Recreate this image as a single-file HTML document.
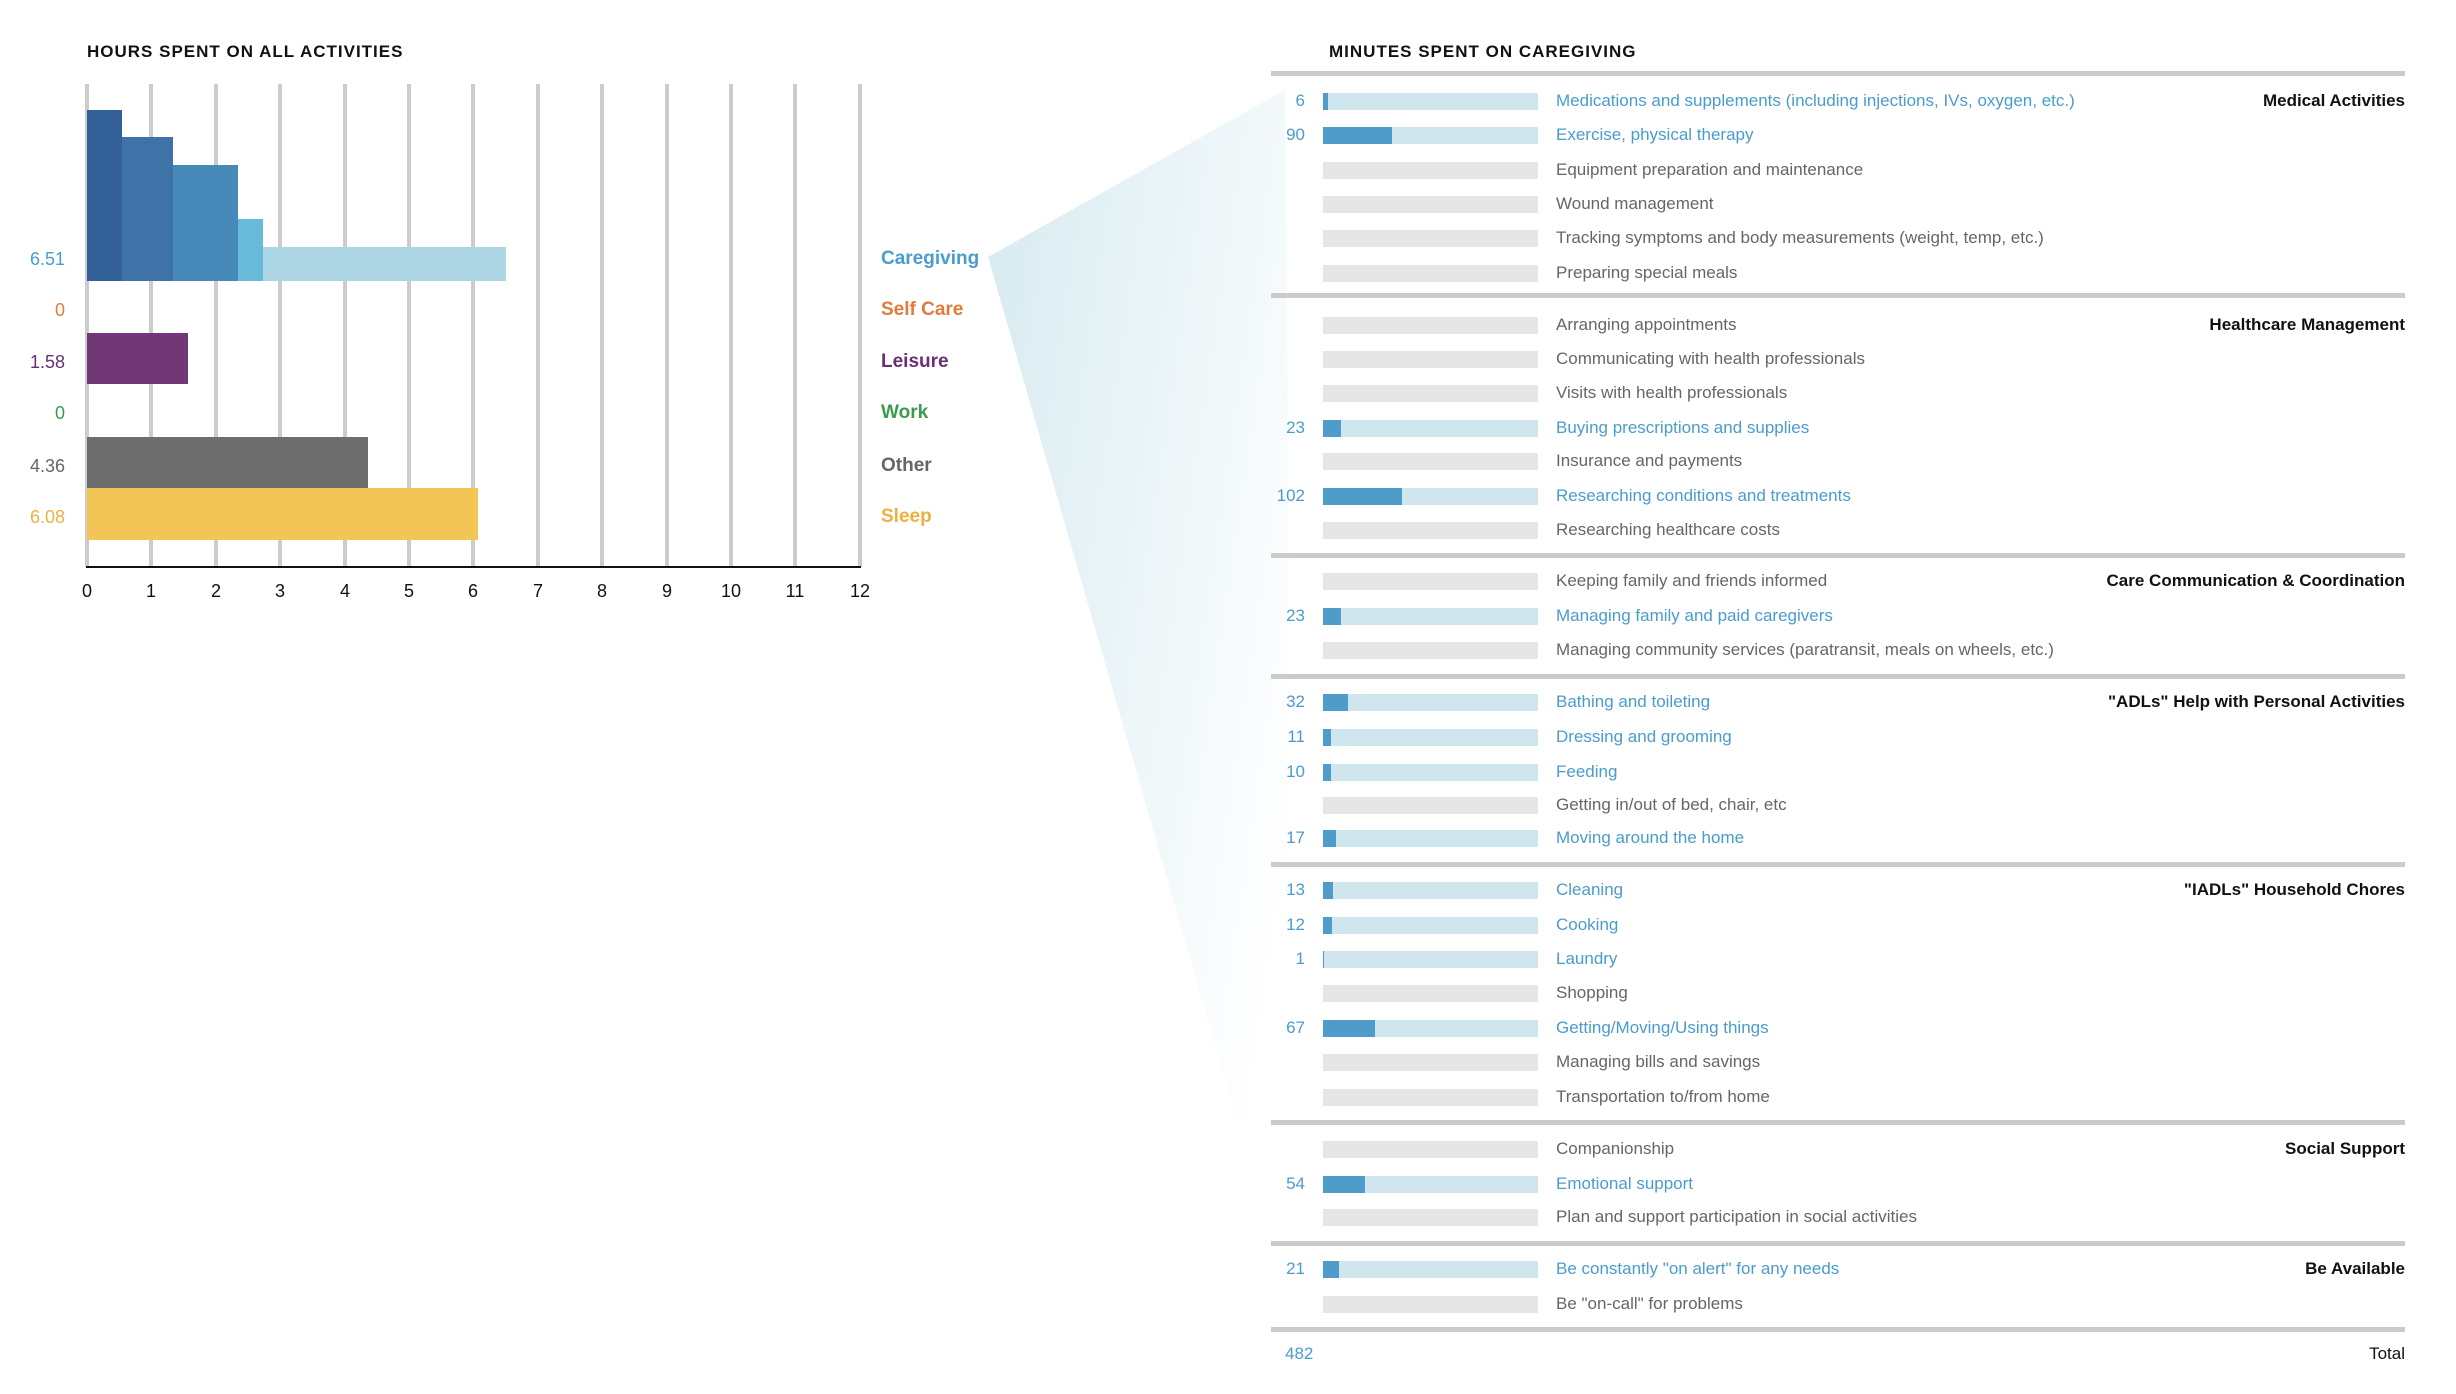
<!DOCTYPE html>
<html><head><meta charset="utf-8"><style>
html,body{margin:0;padding:0;background:#fff;width:2456px;height:1394px;overflow:hidden;position:relative;font-family:"Liberation Sans Narrow","Liberation Sans",sans-serif}
.a{position:absolute}
.title{font-family:"Liberation Sans",sans-serif;font-weight:bold;font-size:17px;letter-spacing:1px;color:#111}
.g{position:absolute;top:84px;height:483px;width:4px;background:#cccccc}
.tk{position:absolute;top:581px;font-size:18px;color:#111;width:40px;margin-left:-20px;text-align:center}
.v{position:absolute;left:0;width:65px;text-align:right;font-size:18px}
.cl{position:absolute;left:881px;font-size:19px;font-weight:bold}
.r{position:absolute;left:1270px;width:1135px;height:20px}
.r .n{position:absolute;left:0;width:35px;text-align:right;font-size:17px;color:#4a9ccc;line-height:20px}
.r .b{position:absolute;left:53px;top:2px;width:215px;height:17px;background:#e6e6e6}
.r .b.on{background:#cfe6ee}
.r .b i{position:absolute;left:0;top:0;height:17px;background:#4f9ccb}
.r .t{position:absolute;left:286px;font-size:17px;color:#666;line-height:20px;white-space:nowrap}
.r .t.on{color:#4a9ccc}
.r .c{position:absolute;right:0;font-size:17px;font-weight:bold;color:#111;line-height:20px;white-space:nowrap}
.rule{position:absolute;left:1271px;width:1134px;height:5px;background:#cbcbcb}
</style></head><body>
<svg class="a" style="left:0;top:0" width="2456" height="1394">
<defs><linearGradient id="fg" x1="0" y1="0" x2="1" y2="0.6"><stop offset="0" stop-color="#d6eaf0"/><stop offset="1" stop-color="#ffffff"/></linearGradient></defs>
<polygon points="988,257 1285,90 1295,1322" fill="url(#fg)"/>
</svg>
<div class="a title" style="left:87px;top:42px">HOURS SPENT ON ALL ACTIVITIES</div>
<div class="g" style="left:85px"></div><div class="g" style="left:149px"></div><div class="g" style="left:214px"></div><div class="g" style="left:278px"></div><div class="g" style="left:343px"></div><div class="g" style="left:407px"></div><div class="g" style="left:471px"></div><div class="g" style="left:536px"></div><div class="g" style="left:600px"></div><div class="g" style="left:665px"></div><div class="g" style="left:729px"></div><div class="g" style="left:793px"></div><div class="g" style="left:858px"></div>
<div class="a" style="left:87px;top:110px;width:35px;height:171px;background:#336098"></div>
<div class="a" style="left:122px;top:137px;width:51px;height:144px;background:#3f73a8"></div>
<div class="a" style="left:173px;top:165px;width:65px;height:116px;background:#4789b8"></div>
<div class="a" style="left:238px;top:219px;width:25px;height:62px;background:#68bada"></div>
<div class="a" style="left:263px;top:247px;width:243px;height:34px;background:#acd6e4"></div>
<div class="a" style="left:87px;top:333px;width:101px;height:51px;background:#713878"></div>
<div class="a" style="left:87px;top:437px;width:281px;height:51px;background:#6e6e6e"></div>
<div class="a" style="left:87px;top:488px;width:391px;height:52px;background:#f1c556"></div>
<div class="a" style="left:86px;top:566px;width:775px;height:2px;background:#111"></div>
<div class="tk" style="left:87px">0</div><div class="tk" style="left:151px">1</div><div class="tk" style="left:216px">2</div><div class="tk" style="left:280px">3</div><div class="tk" style="left:345px">4</div><div class="tk" style="left:409px">5</div><div class="tk" style="left:473px">6</div><div class="tk" style="left:538px">7</div><div class="tk" style="left:602px">8</div><div class="tk" style="left:667px">9</div><div class="tk" style="left:731px">10</div><div class="tk" style="left:795px">11</div><div class="tk" style="left:860px">12</div>
<div class="v" style="top:249px;color:#4a9ccc">6.51</div>
<div class="v" style="top:300px;color:#e07b39">0</div>
<div class="v" style="top:352px;color:#6a2f78">1.58</div>
<div class="v" style="top:403px;color:#3a9b4f">0</div>
<div class="v" style="top:456px;color:#666">4.36</div>
<div class="v" style="top:507px;color:#eeb040">6.08</div>
<div class="cl" style="top:248px;color:#4a9ccc">Caregiving</div>
<div class="cl" style="top:299px;color:#e07b39">Self Care</div>
<div class="cl" style="top:351px;color:#6a2f78">Leisure</div>
<div class="cl" style="top:402px;color:#3a9b4f">Work</div>
<div class="cl" style="top:455px;color:#666">Other</div>
<div class="cl" style="top:506px;color:#eeb040">Sleep</div>

<div class="a title" style="left:1329px;top:42px">MINUTES SPENT ON CAREGIVING</div>
<div class="rule" style="top:71px"></div>
<div class="rule" style="top:293px"></div>
<div class="rule" style="top:553px"></div>
<div class="rule" style="top:674px"></div>
<div class="rule" style="top:862px"></div>
<div class="rule" style="top:1120px"></div>
<div class="rule" style="top:1241px"></div>
<div class="rule" style="top:1327px"></div>

<div class="r" style="top:91px"><span class="n">6</span><div class="b on"><i style="width:5px"></i></div><span class="t on">Medications and supplements (including injections, IVs, oxygen, etc.)</span><span class="c">Medical Activities</span></div>
<div class="r" style="top:125px"><span class="n">90</span><div class="b on"><i style="width:69px"></i></div><span class="t on">Exercise, physical therapy</span></div>
<div class="r" style="top:160px"><div class="b"></div><span class="t">Equipment preparation and maintenance</span></div>
<div class="r" style="top:194px"><div class="b"></div><span class="t">Wound management</span></div>
<div class="r" style="top:228px"><div class="b"></div><span class="t">Tracking symptoms and body measurements (weight, temp, etc.)</span></div>
<div class="r" style="top:263px"><div class="b"></div><span class="t">Preparing special meals</span></div>

<div class="r" style="top:315px"><div class="b"></div><span class="t">Arranging appointments</span><span class="c">Healthcare Management</span></div>
<div class="r" style="top:349px"><div class="b"></div><span class="t">Communicating with health professionals</span></div>
<div class="r" style="top:383px"><div class="b"></div><span class="t">Visits with health professionals</span></div>
<div class="r" style="top:418px"><span class="n">23</span><div class="b on"><i style="width:18px"></i></div><span class="t on">Buying prescriptions and supplies</span></div>
<div class="r" style="top:451px"><div class="b"></div><span class="t">Insurance and payments</span></div>
<div class="r" style="top:486px"><span class="n">102</span><div class="b on"><i style="width:79px"></i></div><span class="t on">Researching conditions and treatments</span></div>
<div class="r" style="top:520px"><div class="b"></div><span class="t">Researching healthcare costs</span></div>

<div class="r" style="top:571px"><div class="b"></div><span class="t">Keeping family and friends informed</span><span class="c">Care Communication &amp; Coordination</span></div>
<div class="r" style="top:606px"><span class="n">23</span><div class="b on"><i style="width:18px"></i></div><span class="t on">Managing family and paid caregivers</span></div>
<div class="r" style="top:640px"><div class="b"></div><span class="t">Managing community services (paratransit, meals on wheels, etc.)</span></div>

<div class="r" style="top:692px"><span class="n">32</span><div class="b on"><i style="width:25px"></i></div><span class="t on">Bathing and toileting</span><span class="c">"ADLs" Help with Personal Activities</span></div>
<div class="r" style="top:727px"><span class="n">11</span><div class="b on"><i style="width:8px"></i></div><span class="t on">Dressing and grooming</span></div>
<div class="r" style="top:762px"><span class="n">10</span><div class="b on"><i style="width:8px"></i></div><span class="t on">Feeding</span></div>
<div class="r" style="top:795px"><div class="b"></div><span class="t">Getting in/out of bed, chair, etc</span></div>
<div class="r" style="top:828px"><span class="n">17</span><div class="b on"><i style="width:13px"></i></div><span class="t on">Moving around the home</span></div>

<div class="r" style="top:880px"><span class="n">13</span><div class="b on"><i style="width:10px"></i></div><span class="t on">Cleaning</span><span class="c">"IADLs" Household Chores</span></div>
<div class="r" style="top:915px"><span class="n">12</span><div class="b on"><i style="width:9px"></i></div><span class="t on">Cooking</span></div>
<div class="r" style="top:949px"><span class="n">1</span><div class="b on"><i style="width:1px"></i></div><span class="t on">Laundry</span></div>
<div class="r" style="top:983px"><div class="b"></div><span class="t">Shopping</span></div>
<div class="r" style="top:1018px"><span class="n">67</span><div class="b on"><i style="width:52px"></i></div><span class="t on">Getting/Moving/Using things</span></div>
<div class="r" style="top:1052px"><div class="b"></div><span class="t">Managing bills and savings</span></div>
<div class="r" style="top:1087px"><div class="b"></div><span class="t">Transportation to/from home</span></div>

<div class="r" style="top:1139px"><div class="b"></div><span class="t">Companionship</span><span class="c">Social Support</span></div>
<div class="r" style="top:1174px"><span class="n">54</span><div class="b on"><i style="width:42px"></i></div><span class="t on">Emotional support</span></div>
<div class="r" style="top:1207px"><div class="b"></div><span class="t">Plan and support participation in social activities</span></div>

<div class="r" style="top:1259px"><span class="n">21</span><div class="b on"><i style="width:16px"></i></div><span class="t on">Be constantly "on alert" for any needs</span><span class="c">Be Available</span></div>
<div class="r" style="top:1294px"><div class="b"></div><span class="t">Be "on-call" for problems</span></div>

<div class="a" style="left:1285px;top:1344px;font-size:17px;color:#4a9ccc">482</div>
<div class="a" style="right:51px;top:1344px;font-size:17px;color:#111">Total</div>
</body></html>
